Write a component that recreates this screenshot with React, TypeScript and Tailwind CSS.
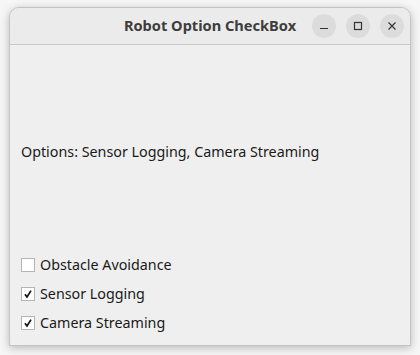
import React from "react";

function Check({ checked }: { checked: boolean }) {
  return (
    <div className="w-[14px] h-[14px] border border-[#b5b5b5] bg-white flex items-center justify-center">
      {checked && (
        <svg width="12" height="12" viewBox="0 0 12 12">
          <path d="M3 6.2 L5 9 L9 2.6" stroke="#111" strokeWidth="1.7" fill="none" />
        </svg>
      )}
    </div>
  );
}

export default function App() {
  const items = [
    { label: "Obstacle Avoidance", checked: false },
    { label: "Sensor Logging", checked: true },
    { label: "Camera Streaming", checked: true },
  ];
  return (
    <div className="w-[420px] h-[355px] bg-[#f6f6f6] pt-[7px] pl-[9px]" style={{ fontFamily: '"Noto Sans", sans-serif' }}>
      <div className="w-[402px] h-[339px] bg-[#efefef] rounded-t-[10px] border border-[#c4c4c4] shadow-[0_2px_8px_rgba(0,0,0,0.25)] flex flex-col overflow-hidden">
        <div className="h-[37px] bg-[#ebebeb] border-b border-[#c9c9c9] flex items-center relative shrink-0">
          <div className="absolute left-0 right-0 text-center text-[14.6px] font-bold text-[#3d3d3d]">
            Robot Option CheckBox
          </div>
          <div className="ml-auto flex gap-[10px] pr-[6px] relative">
            <div className="w-[24px] h-[24px] rounded-full bg-[#dcdcdc] flex items-center justify-center">
              <svg width="10" height="10" viewBox="0 0 10 10"><path d="M1 7.5 H9" stroke="#333" strokeWidth="1.2" /></svg>
            </div>
            <div className="w-[24px] h-[24px] rounded-full bg-[#dcdcdc] flex items-center justify-center">
              <svg width="10" height="10" viewBox="0 0 10 10"><rect x="1.5" y="1.5" width="7" height="7" stroke="#333" strokeWidth="1.2" fill="none" /></svg>
            </div>
            <div className="w-[24px] h-[24px] rounded-full bg-[#dcdcdc] flex items-center justify-center">
              <svg width="10" height="10" viewBox="0 0 10 10"><path d="M1.5 1.5 L8.5 8.5 M8.5 1.5 L1.5 8.5" stroke="#333" strokeWidth="1.2" /></svg>
            </div>
          </div>
        </div>
        <div className="flex-1 flex flex-col px-[11px]">
          <div className="h-[97px]" />
          <div className="text-[14.3px] text-[#1a1a1a] leading-[20px]">Options: Sensor Logging, Camera Streaming</div>
          <div className="flex-1" />
          <div className="flex flex-col gap-[9px] pb-[12px]">
            {items.map((it) => (
              <div key={it.label} className="flex items-center gap-[5px] h-[20px]">
                <Check checked={it.checked} />
                <span className="text-[14.3px] text-[#1a1a1a]">{it.label}</span>
              </div>
            ))}
          </div>
        </div>
      </div>
    </div>
  );
}
